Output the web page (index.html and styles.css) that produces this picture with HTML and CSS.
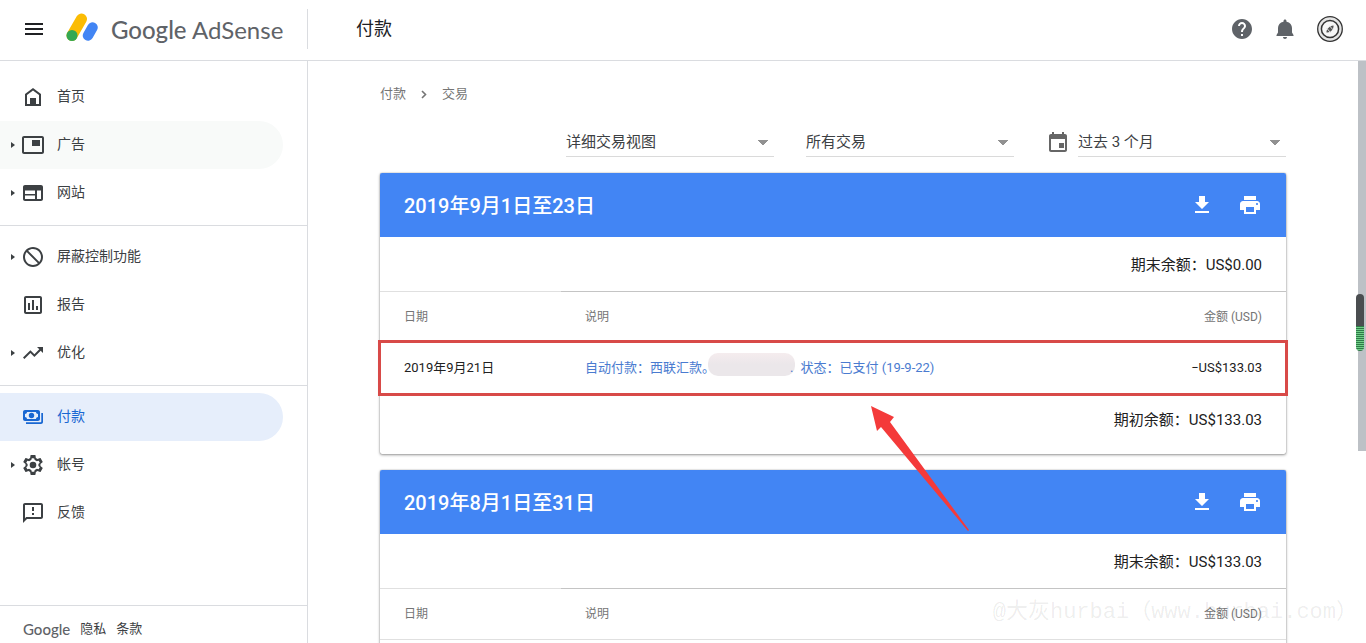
FILE: index.html
```html
<!DOCTYPE html>
<html lang="zh-CN">
<head>
  <meta charset="UTF-8">
  <meta name="viewport" content="width=device-width, initial-scale=1">
  <title>Google AdSense - 付款</title>
  <link rel="stylesheet" href="styles.css">
</head>
<body>
  <header class="topbar">
    <div class="brand">
      <button type="button" class="icon-btn menu-btn" aria-label="菜单">
        <svg viewBox="0 0 24 24"><path d="M3 18h18v-2H3v2zm0-5h18v-2H3v2zm0-7v2h18V6H3z"/></svg>
      </button>
      <svg class="logo" viewBox="0 0 34 32">
        <g fill="none" stroke-width="11" stroke-linecap="round">
          <path d="M7 24.500L16.500 8" stroke="#fbbc04"/>
          <path d="M23 24.500L27.500 16.500" stroke="#4285f4" stroke-width="10.500"/>
        </g>
        <circle cx="7" cy="24.500" r="5.500" fill="#34a853"/>
      </svg>
      <span class="brand-name"><b>Google</b> AdSense</span>
    </div>
    <h1>付款</h1>
    <div class="top-actions">
      <button type="button" class="icon-btn" aria-label="帮助">
        <svg viewBox="0 0 24 24"><path d="M12 2C6.480 2 2 6.480 2 12s4.480 10 10 10 10-4.480 10-10S17.520 2 12 2zm1 17h-2v-2h2v2zm2.070-7.750l-.9.920C13.450 12.900 13 13.500 13 15h-2v-.5c0-1.100.45-2.100 1.170-2.830l1.240-1.260c.37-.36.59-.86.59-1.410 0-1.100-.9-2-2-2s-2 .9-2 2H8c0-2.210 1.790-4 4-4s4 1.790 4 4c0 .88-.36 1.680-.93 2.250z"/></svg>
      </button>
      <button type="button" class="icon-btn" aria-label="通知">
        <svg viewBox="0 0 24 24"><path d="M12 22c1.100 0 2-.9 2-2h-4c0 1.100.9 2 2 2zm7-6.500V11c0-3.070-1.900-5.640-5.500-6.320V4c0-.83-.67-1.500-1.500-1.500s-1.500.67-1.500 1.500v.68C6.900 5.360 5 7.920 5 11v4.500L3.500 18v1h17v-1L19 15.500z"/></svg>
      </button>
      <button type="button" class="icon-btn avatar" aria-label="帐号">
        <svg viewBox="0 0 28 28">
          <circle cx="14" cy="14" r="12.300" fill="#e4e4e4" stroke="#333" stroke-width="1.300"/>
          <circle cx="14" cy="14" r="8.600" fill="#f6f6f6" stroke="#333" stroke-width="1.500"/>
          <path d="M10.500 17.500c-.5-3 3-7 7-7 .5 3.500-3 7.500-7 7z" fill="#555"/>
          <path d="M10.500 13l4 4.500M13.500 10.800l3.500 4" stroke="#ddd" stroke-width="1"/>
        </svg>
      </button>
    </div>
  </header>

  <div class="layout">
    <aside class="sidebar">
      <nav>
        <ul>
          <li><a href="#" class="item leaf">
            <svg viewBox="0 0 24 24"><path d="M12 3L4 9v12h16V9l-8-6zm6 16h-3v-6H9v6H6v-9l6-4.500 6 4.500v9z"/><path d="M9 13h6v7H9z"/></svg><span>首页</span></a></li>
          <li><a href="#" class="item hover">
            <svg viewBox="0 0 24 24"><path d="M19 7h-8v6h8V7zm2-4H3c-1.100 0-2 .9-2 2v14c0 1.100.9 1.980 2 1.980h18c1.100 0 2-.88 2-1.980V5c0-1.100-.9-2-2-2zm0 16.010H3V4.980h18v14.030z"/></svg><span>广告</span></a></li>
          <li><a href="#" class="item">
            <svg viewBox="0 0 24 24"><path d="M20 4H4c-1.100 0-2 .9-2 2v12c0 1.100.9 2 2 2h16c1.100 0 2-.9 2-2V6c0-1.100-.9-2-2-2zm-6 14H4v-3.500h10V18zm0-5H4V9.500h10V13zm6 5h-4V9.500h4V18z"/></svg><span>网站</span></a></li>
        </ul>
        <ul>
          <li><a href="#" class="item">
            <svg viewBox="0 0 24 24"><path d="M12 2C6.480 2 2 6.480 2 12s4.480 10 10 10 10-4.480 10-10S17.520 2 12 2zM4 12c0-4.420 3.580-8 8-8 1.850 0 3.550.63 4.900 1.690L5.690 16.900C4.630 15.550 4 13.850 4 12zm8 8c-1.850 0-3.550-.63-4.900-1.690L18.310 7.100C19.370 8.450 20 10.150 20 12c0 4.420-3.580 8-8 8z" transform="matrix(-1 0 0 1 24 0)"/></svg><span>屏蔽控制功能</span></a></li>
          <li><a href="#" class="item leaf">
            <svg viewBox="0 0 24 24"><path d="M19 3H5c-1.100 0-2 .9-2 2v14c0 1.100.9 2 2 2h14c1.100 0 2-.9 2-2V5c0-1.100-.9-2-2-2zm0 16H5V5h14v14zM7 10h2v7H7zm4-3h2v10h-2zm4 6h2v4h-2z"/></svg><span>报告</span></a></li>
          <li><a href="#" class="item">
            <svg viewBox="0 0 24 24"><path d="M16 6l2.290 2.290-4.880 4.880-4-4L2 16.590 3.410 18l6-6 4 4 6.300-6.290L22 12V6z"/></svg><span>优化</span></a></li>
        </ul>
        <ul>
          <li><a href="#" class="item leaf active" aria-current="page">
            <svg viewBox="0 0 24 24"><path fill-rule="evenodd" d="M4 5h13c1.100 0 2 .9 2 2v7c0 1.100-.9 2-2 2H4c-1.100 0-2-.9-2-2V7c0-1.100.9-2 2-2zm2 2c0 1.100-.9 2-2 2v3c1.100 0 2 .9 2 2h9c0-1.100.9-2 2-2V9c-1.100 0-2-.9-2-2H6z"/><circle cx="10.500" cy="10.500" r="2.700"/><path d="M22 8v9c0 1.100-.9 2-2 2H5v-1.700h14.300c.6 0 1-.4 1-1V8z"/></svg><span>付款</span></a></li>
          <li><a href="#" class="item">
            <svg viewBox="0 0 24 24"><path d="M19.430 12.980c.04-.32.07-.64.07-.98s-.03-.66-.07-.98l2.110-1.650c.19-.15.24-.42.12-.64l-2-3.460c-.12-.22-.39-.3-.61-.22l-2.490 1c-.52-.4-1.080-.73-1.690-.98l-.38-2.650C14.460 2.180 14.250 2 14 2h-4c-.25 0-.46.18-.49.42l-.38 2.650c-.61.25-1.170.59-1.690.98l-2.490-1c-.23-.09-.49 0-.61.22l-2 3.460c-.13.22-.07.49.12.64l2.110 1.650c-.04.32-.07.65-.07.98s.03.66.07.98l-2.110 1.650c-.19.15-.24.42-.12.64l2 3.460c.12.22.39.3.61.22l2.490-1c.52.4 1.080.73 1.690.98l.38 2.650c.03.24.24.42.49.42h4c.25 0 .46-.18.49-.42l.38-2.650c.61-.25 1.170-.59 1.690-.98l2.490 1c.23.09.49 0 .61-.22l2-3.460c.12-.22.07-.49-.12-.64l-2.110-1.650z"/><path d="M12 5.200l1.200.2.500 1.700 2.200 1.200 1.700-.6 1.200 2-1.400 1.300v2l1.400 1.300-1.200 2-1.700-.6-2.200 1.200-.5 1.900h-2.400l-.5-1.900-2.200-1.200-1.700.6-1.200-2 1.400-1.300v-2L5.200 9.700l1.200-2 1.700.6 2.200-1.200.5-1.900z" fill="#fff"/><circle cx="12" cy="12" r="3.300"/></svg><span>帐号</span></a></li>
          <li><a href="#" class="item leaf">
            <svg viewBox="0 0 24 24"><path d="M20 2H4c-1.100 0-1.990.9-1.990 2L2 22l4-4h14c1.100 0 2-.9 2-2V4c0-1.100-.9-2-2-2zm0 14H5.170L4 17.170V4h16v12zM11 12h2v2h-2zm0-6h2v4h-2z"/></svg><span>反馈</span></a></li>
        </ul>
      </nav>
      <footer>
        <span class="google">Google</span>
        <a href="#">隐私</a>
        <a href="#">条款</a>
      </footer>
    </aside>

    <main>
      <div class="breadcrumb">
        <a href="#">付款</a>
        <svg viewBox="0 0 8 12"><path d="M2 3l3.500 3.500L2 10" fill="none" stroke="#757575" stroke-width="1.600"/></svg>
        <span>交易</span>
      </div>

      <div class="filters">
        <select aria-label="视图"><option>详细交易视图</option></select>
        <select aria-label="交易类型"><option>所有交易</option></select>
        <div class="date-filter">
          <svg viewBox="0 0 24 24"><path d="M18 13h-5v5h5v-5zM16 2v2H8V2H6v2H5c-1.110 0-1.990.9-1.990 2L3 20c0 1.100.89 2 2 2h14c1.100 0 2-.9 2-2V6c0-1.100-.9-2-2-2h-1V2h-2zm3 18H5V9h14v11z"/></svg>
          <select aria-label="日期范围"><option>过去 3 个月</option></select>
        </div>
      </div>

      <section class="card">
        <div class="card-head">
          <h2>2019年9月1日至23日</h2>
          <button type="button" class="icon-btn" aria-label="下载"><svg viewBox="0 0 24 24"><path d="M19 9h-4V3H9v6H5l7 7 7-7zM5 18v2h14v-2H5z"/></svg></button>
          <button type="button" class="icon-btn" aria-label="打印"><svg viewBox="0 0 24 24"><path d="M19 8H5c-1.660 0-3 1.340-3 3v6h4v4h12v-4h4v-6c0-1.660-1.340-3-3-3zm-3 11H8v-5h8v5zm3-7c-.55 0-1-.45-1-1s.45-1 1-1 1 .45 1 1-.45 1-1 1zm-1-9H6v4h12V3z"/></svg></button>
        </div>
        <div class="balance">期末余额：US$0.00</div>
        <table>
          <thead>
            <tr><th class="date">日期</th><th>说明</th><th class="amount">金额 (USD)</th></tr>
          </thead>
          <tbody>
            <tr class="marked">
              <td>2019年9月21日</td>
              <td><a href="#">自动付款：西联汇款。<span class="redacted"></span>.<span class="status">状态：已支付 (19-9-22)</span></a></td>
              <td class="amount">−US$133.03</td>
            </tr>
          </tbody>
        </table>
        <div class="balance closing">期初余额：US$133.03</div>
        <svg class="arrow" viewBox="0 0 98 125"><path d="M0 0L23 11 19 16 98 124 97 125 10 21 6 25z"/></svg>
      </section>

      <section class="card">
        <div class="card-head">
          <h2>2019年8月1日至31日</h2>
          <button type="button" class="icon-btn" aria-label="下载"><svg viewBox="0 0 24 24"><path d="M19 9h-4V3H9v6H5l7 7 7-7zM5 18v2h14v-2H5z"/></svg></button>
          <button type="button" class="icon-btn" aria-label="打印"><svg viewBox="0 0 24 24"><path d="M19 8H5c-1.660 0-3 1.340-3 3v6h4v4h12v-4h4v-6c0-1.660-1.340-3-3-3zm-3 11H8v-5h8v5zm3-7c-.55 0-1-.45-1-1s.45-1 1-1 1 .45 1 1-.45 1-1 1zm-1-9H6v4h12V3z"/></svg></button>
        </div>
        <div class="balance">期末余额：US$133.03</div>
        <table>
          <thead>
            <tr><th class="date">日期</th><th>说明</th><th class="amount">金额 (USD)</th></tr>
          </thead>
          <tbody>
            <tr><td></td><td></td><td></td></tr>
          </tbody>
        </table>
      </section>
    </main>

    <div class="scrollbar"><div class="thumb"></div></div>
  </div>

  <div class="meter"></div>
  <div class="watermark">@大灰hurbai（www.hurbai.com）</div>
</body>
</html>
```
FILE: styles.css
```css
* {
  box-sizing: border-box;
}

body {
  margin: 0;
  height: 100vh;
  display: flex;
  flex-direction: column;
  position: relative;
  overflow: hidden;
  font-family: Roboto, "Noto Sans CJK SC", sans-serif;
  font-size: 14px;
  line-height: 20px;
  color: #3c4043;
  background: #fff;
}

a {
  color: inherit;
  text-decoration: none;
}

svg {
  display: block;
  flex: none;
  fill: currentColor;
}

.icon-btn {
  width: 24px;
  height: 24px;
  padding: 0;
  border: none;
  background: none;
  color: inherit;
  cursor: pointer;
}

/* top bar */
.topbar {
  flex: none;
  display: flex;
  align-items: center;
  height: 61px;
  padding-bottom: 2px;
  border-bottom: 1px solid #dadce0;
}

.brand {
  display: flex;
  align-items: center;
  width: 308px;
  height: 40px;
  padding-left: 22px;
  border-right: 1px solid #dadce0;
}

.menu-btn {
  color: #202124;
}

.logo {
  width: 34px;
  height: 32px;
  margin: 0 12px 4px 19px;
}

.brand-name {
  padding-top: 2px;
  font-family: Lato, sans-serif;
  font-size: 24px;
  line-height: 32px;
  color: #5f6368;
  white-space: nowrap;
}

.brand-name b {
  font-weight: 500;
}

.topbar h1 {
  flex: 1;
  margin: 0 0 0 48px;
  font-size: 18px;
  font-weight: 400;
  line-height: 24px;
  color: #202124;
}

.top-actions {
  display: flex;
  align-items: center;
  gap: 19px;
  padding-right: 22px;
  color: #5f6368;
}

.avatar {
  width: 28px;
  height: 28px;
}

/* sidebar */
.layout {
  flex: 1;
  min-height: 0;
  display: flex;
}

.sidebar {
  flex: none;
  display: flex;
  flex-direction: column;
  width: 308px;
  border-right: 1px solid #dadce0;
}

nav {
  flex: 1;
  padding-top: 4px;
}

nav ul {
  margin: 0;
  padding: 8px 0;
  list-style: none;
}

nav ul + ul {
  padding-top: 7px;
  border-top: 1px solid #dadce0;
}

.item {
  display: flex;
  align-items: center;
  height: 48px;
  margin-right: 24px;
  padding-left: 11px;
  border-radius: 0 24px 24px 0;
}

.item::before {
  content: "";
  margin-right: 6px;
  border: solid transparent;
  border-width: 3px 0 3px 4px;
  border-left-color: #3c4043;
}

.item.leaf::before {
  border-left-color: transparent;
}

.item svg {
  width: 24px;
  height: 24px;
  margin-right: 12px;
}

.item span {
  padding-bottom: 2px;
}

.item.hover {
  background: #f8faf9;
}

.item.active {
  background: #e6eefb;
  color: #1967d2;
}

.sidebar footer {
  display: flex;
  align-items: center;
  gap: 10px;
  height: 38px;
  padding: 8px 0 0 23px;
  border-top: 1px solid #dadce0;
  font-size: 13px;
}

.google {
  font-family: Lato, sans-serif;
  font-size: 15px;
  font-weight: 500;
  color: #5f6368;
}

/* content */
main {
  flex: 1;
  min-width: 0;
  padding: 23px 72px 0;
  overflow: hidden;
}

.breadcrumb {
  display: flex;
  align-items: center;
  gap: 14px;
  font-size: 13px;
  color: #757575;
}

.breadcrumb svg {
  width: 8px;
  height: 12px;
}

.filters {
  display: flex;
  justify-content: flex-end;
  gap: 32px;
  margin: 23px 0 16px;
}

select {
  appearance: none;
  width: 208px;
  height: 30px;
  padding: 0;
  border: none;
  border-bottom: 1px solid #dadada;
  border-radius: 0;
  background: conic-gradient(from -45deg at 50% 100%, #919191 90deg, transparent 0) right 6px top 13px / 10px 5px no-repeat;
  font-family: inherit;
  font-size: 15px;
  color: #3c4043;
}

.date-filter {
  display: flex;
  align-items: center;
  gap: 8px;
}

.date-filter svg {
  width: 24px;
  height: 24px;
  color: #666;
}

.card {
  position: relative;
  margin-bottom: 16px;
  border-radius: 2px;
  background: #fff;
  box-shadow: 0 0 1px rgba(0, 0, 0, .5), 0 1px 3px rgba(0, 0, 0, .4);
}

.card-head {
  display: flex;
  align-items: center;
  gap: 24px;
  height: 64px;
  padding: 0 24px;
  border-radius: 2px 2px 0 0;
  background: #4285f4;
  color: #fff;
}

.card-head h2 {
  flex: 1;
  margin: 0;
  padding-top: 2px;
  font-size: 20px;
  font-weight: 500;
}

.balance {
  padding: 2px 24px 0;
  font-size: 15px;
  line-height: 52px;
  text-align: right;
  color: #212121;
}

.closing {
  padding: 0 24px 8px;
}

table {
  width: 100%;
  border-spacing: 0;
  font-size: 13px;
  color: #212121;
}

th,
td {
  height: 52px;
  padding: 0 24px;
  border-top: 1px solid #e0e0e0;
  text-align: left;
}

th {
  height: 51px;
  border-color: #c4c4c4;
  font-size: 12px;
  font-weight: 400;
  color: #757575;
}

td {
  padding-bottom: 2px;
}

.date {
  width: 181px;
  border-color: #e0e0e0;
}

.amount {
  text-align: right;
}

td a {
  color: #4a7bd0;
}

.marked {
  outline: 3px solid #d84a48;
  outline-offset: -1px;
}

.redacted {
  display: inline-block;
  width: 87px;
  height: 23px;
  margin: -10px -5px -2px -7px;
  border-radius: 10px;
  background: linear-gradient(#f5ecee, #ebe7ea 50%);
  vertical-align: middle;
}

.status {
  margin-left: 7px;
}

.arrow {
  position: absolute;
  top: 233px;
  left: 491px;
  z-index: 1;
  width: 98px;
  height: 125px;
  color: #f43a3a;
}

.scrollbar {
  flex: none;
  width: 8px;
}

.thumb {
  height: 67%;
  background: #bdc1c6;
}

/* floating bits over the page */
.meter {
  position: absolute;
  top: 294px;
  right: 2px;
  width: 8px;
  height: 57px;
  border-radius: 4px;
  background: linear-gradient(#4a4d50 32px, transparent 32px), repeating-linear-gradient(#2f7a48 0 1px, #6fcf87 1px 2px);
}

.watermark {
  position: absolute;
  right: 8px;
  bottom: 14px;
  font-family: "Liberation Mono", "Noto Sans CJK SC", monospace;
  font-size: 22px;
  line-height: 32px;
  color: rgba(0, 0, 0, .08);
  pointer-events: none;
}
```
